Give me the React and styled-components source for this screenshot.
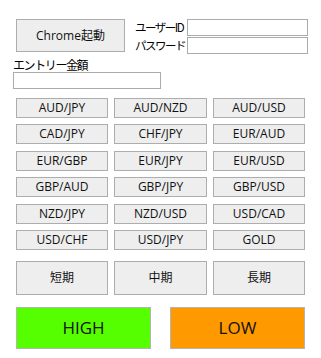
import React from "react";
import styled, { createGlobalStyle } from "styled-components";

const Global = createGlobalStyle`
  html, body { margin: 0; padding: 0; background: #ffffff; }
  body {
    font-family: "Open Sans", "Noto Sans CJK JP", sans-serif;
    color: #000;
  }
  * { box-sizing: border-box; }
`;

const Page = styled.div`
  width: 321px;
  height: 358px;
  padding: 19px 0 0 16px;
  display: flex;
  flex-direction: column;
`;

const Top = styled.div`
  display: flex;
  align-items: flex-start;
`;

const Btn = styled.button`
  font-family: "Open Sans", "Noto Sans CJK JP", sans-serif;
  font-size: ${(p) => p.$fs || 12}px;
  color: #111;
  background: ${(p) => p.$bg || "#eeeeee"};
  border: 1px solid ${(p) => p.$bd || "#adadad"};
  width: ${(p) => (p.$w ? `${p.$w}px` : "100%")};
  height: ${(p) => p.$h}px;
  padding: 0;
  margin: 0;
  display: flex;
  align-items: center;
  justify-content: center;
  line-height: 1;
`;

const Labels = styled.div`
  display: flex;
  flex-direction: column;
  margin-left: 10px;
  width: 52px;
  font-family: "Noto Sans CJK JP", sans-serif;
  font-size: 11.5px;
`;

const Label = styled.div`
  height: 18px;
  line-height: 16px;
  white-space: nowrap;
  letter-spacing: -1.5px;
`;

const Inputs = styled.div`
  display: flex;
  flex-direction: column;
  gap: 1px;
`;

const Input = styled.div`
  width: ${(p) => p.$w}px;
  height: 17px;
  border: 1px solid #ababab;
  background: #fff;
`;

const EntryLabel = styled.div`
  font-family: "Noto Sans CJK JP", sans-serif;
  font-size: 12px;
  line-height: 14px;
  margin: 3px 0 0 -3px;
  height: 14px;
  letter-spacing: -1.4px;
`;

const EntryInput = styled(Input)`
  margin: 0 0 0 -3px;
`;

const Grid = styled.div`
  display: grid;
  grid-template-columns: 92px 93px 92px;
  column-gap: 6px;
  row-gap: 6.4px;
  margin-top: 9px;
`;

const PeriodRow = styled.div`
  display: grid;
  grid-template-columns: 92px 93px 92px;
  column-gap: 6px;
  margin-top: 11px;
`;

const TradeRow = styled.div`
  display: flex;
  gap: 19px;
  margin-top: 12px;
`;

const pairs = [
  "AUD/JPY", "AUD/NZD", "AUD/USD",
  "CAD/JPY", "CHF/JPY", "EUR/AUD",
  "EUR/GBP", "EUR/JPY", "EUR/USD",
  "GBP/AUD", "GBP/JPY", "GBP/USD",
  "NZD/JPY", "NZD/USD", "USD/CAD",
  "USD/CHF", "USD/JPY", "GOLD",
];

export default function App() {
  return (
    <>
      <Global />
      <Page>
        <Top>
          <Btn $w={109} $h={33}>Chrome起動</Btn>
          <Labels>
            <Label>ユーザーID</Label>
            <Label>パスワード</Label>
          </Labels>
          <Inputs>
            <Input $w={121} />
            <Input $w={121} />
          </Inputs>
        </Top>
        <EntryLabel>エントリー金額</EntryLabel>
        <EntryInput $w={148} />
        <Grid>
          {pairs.map((p) => (
            <Btn key={p} $h={20}>{p}</Btn>
          ))}
        </Grid>
        <PeriodRow>
          {["短期", "中期", "長期"].map((p) => (
            <Btn key={p} $h={34}>{p}</Btn>
          ))}
        </PeriodRow>
        <TradeRow>
          <Btn $w={135} $h={42} $fs={17} $bg="#55ff00" $bd="#b4b4b4">HIGH</Btn>
          <Btn $w={135} $h={42} $fs={17} $bg="#ff9900" $bd="#b4b4b4">LOW</Btn>
        </TradeRow>
      </Page>
    </>
  );
}
